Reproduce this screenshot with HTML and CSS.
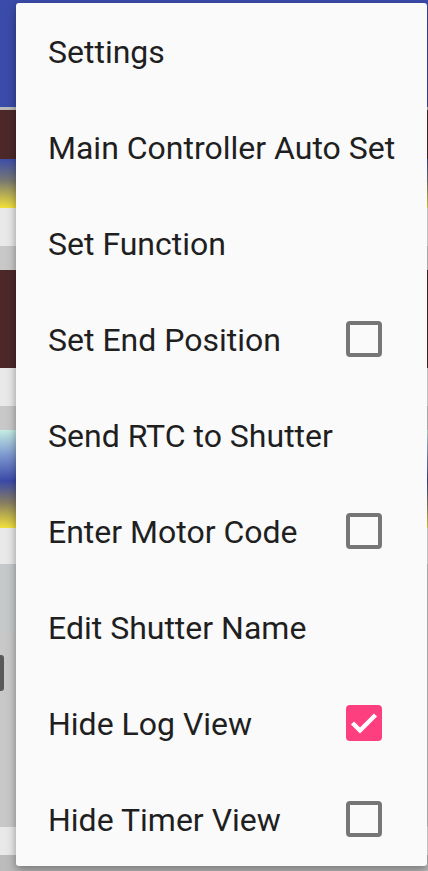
FILE: index.html
```html
<!DOCTYPE html>
<html>
<head>
<meta charset="utf-8">
<link rel="stylesheet" href="styles.css">
</head>
<body>
<div class="screen">
  <div class="backdrop">
    <div class="seg appbar"></div>
    <div class="seg divider"></div>
    <div class="seg brown h49"></div>
    <div class="seg grad-by h49"></div>
    <div class="seg light h38"></div>
    <div class="seg gray h24"></div>
    <div class="seg brown h98"></div>
    <div class="seg light h38"></div>
    <div class="seg gray h24"></div>
    <div class="seg grad-cby h98"></div>
    <div class="seg light h36"></div>
    <div class="seg gray2 h68"></div>
    <div class="seg gray h195"><span class="handle"></span></div>
    <div class="seg light h28"></div>
    <div class="seg gray3 h16"></div>
  </div>
  <div class="menu">
    <div class="item"><span class="label">Settings</span></div>
    <div class="item"><span class="label">Main Controller Auto Set</span></div>
    <div class="item"><span class="label">Set Function</span></div>
    <div class="item"><span class="label">Set End Position</span><span class="check"></span></div>
    <div class="item"><span class="label">Send RTC to Shutter</span></div>
    <div class="item"><span class="label">Enter Motor Code</span><span class="check"></span></div>
    <div class="item"><span class="label">Edit Shutter Name</span></div>
    <div class="item"><span class="label">Hide Log View</span><span class="check checked"><svg viewBox="0 0 36 36" width="36" height="36"><path d="M6.5 18 L14 25.5 L29.5 10" fill="none" stroke="#fff" stroke-width="4.4"/></svg></span></div>
    <div class="item"><span class="label">Hide Timer View</span><span class="check"></span></div>
  </div>
</div>
</body>
</html>
```

FILE: styles.css
```css
html, body {
  margin: 0;
  padding: 0;
}
body {
  width: 428px;
  height: 871px;
  overflow: hidden;
  font-family: Roboto, "Liberation Sans", sans-serif;
}
.screen {
  position: relative;
  width: 428px;
  height: 871px;
  overflow: hidden;
}
.backdrop {
  display: flex;
  flex-direction: column;
  width: 100%;
  height: 100%;
}
.seg { flex: none; position: relative; }
.appbar { height: 107px; background: #3b4ba9; }
.divider { height: 3px; background: #b9b9b9; }
.brown { background: #4c2829; }
.grad-by { background: linear-gradient(#3d4ea9, #7a7a70 45%, #f2e13a); }
.grad-cby { background: linear-gradient(#c4ede2, #7f9ad0 25%, #3b4aa8 52%, #8a8060 75%, #f2e13a); }
.light { background: #e9e9e9; }
.gray { background: #c8c8c8; }
.gray2 { background: #c6c9c9; }
.gray3 { background: #bcbcbc; }
.h16 { height: 16px; }
.h24 { height: 24px; }
.h28 { height: 28px; }
.h36 { height: 36px; }
.h38 { height: 38px; }
.h49 { height: 49px; }
.h68 { height: 68px; }
.h98 { height: 98px; }
.h195 { height: 195px; }
.handle {
  position: absolute;
  left: -4px;
  top: 23px;
  width: 8px;
  height: 36px;
  border-radius: 3px;
  background: #595959;
}
.menu {
  position: absolute;
  left: 16px;
  top: 3px;
  width: 411px;
  height: 863px;
  padding-top: 1px;
  box-sizing: border-box;
  background: #fafafa;
  border-radius: 3px;
  overflow: hidden;
  box-shadow: 0 6px 12px rgba(0,0,0,0.22), 0 2px 6px rgba(0,0,0,0.18);
}
.item {
  height: 96px;
  display: flex;
  align-items: center;
  justify-content: space-between;
  padding: 0 45px 0 32px;
  box-sizing: border-box;
}
.label {
  font-size: 32px;
  color: #1f1f1f;
  white-space: nowrap;
  letter-spacing: 0;
}
.check {
  flex: none;
  width: 36px;
  height: 36px;
  box-sizing: border-box;
  border: 4.3px solid #767676;
  border-radius: 4px;
  margin-top: -3px;
}
.check.checked {
  border: none;
  background: #fd3f7f;
}
.check svg { display: block; }
```
